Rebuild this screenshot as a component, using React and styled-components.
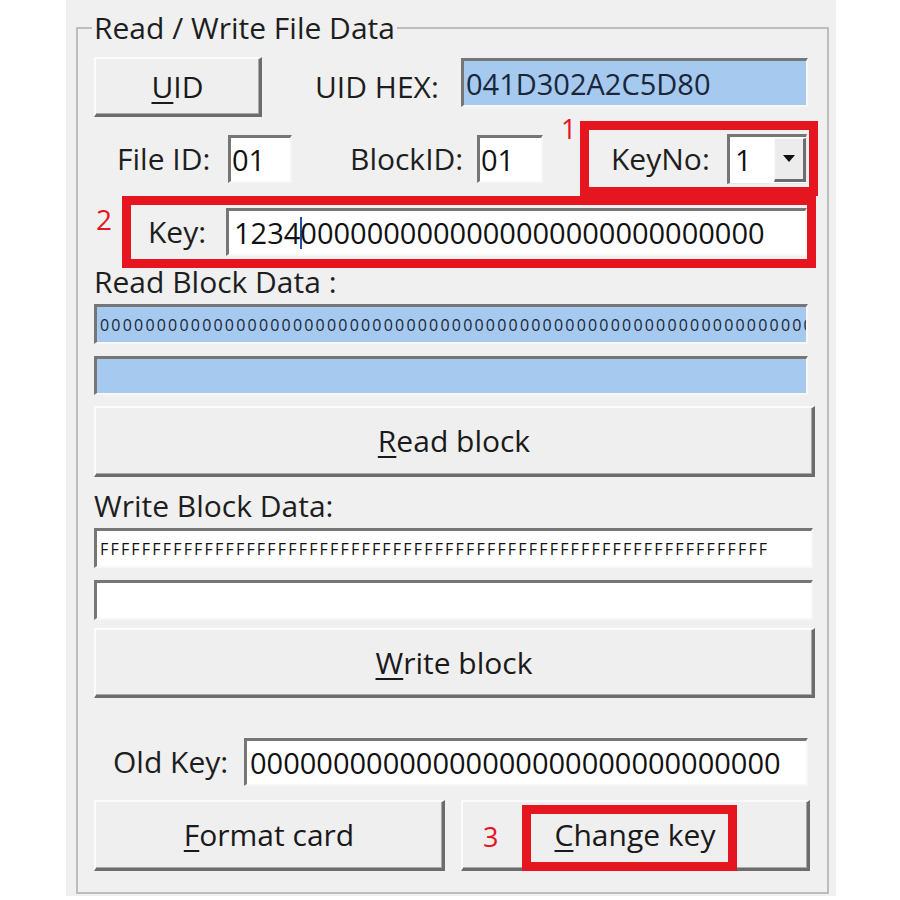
import React from 'react';
import styled, { createGlobalStyle } from 'styled-components';

const Global = createGlobalStyle`
  html, body { margin: 0; padding: 0; background: #ffffff; }
  body { font-family: "Open Sans", "Noto Sans", sans-serif; }
`;

const FONT = `"Open Sans", "Noto Sans", sans-serif`;
const RED = '#e5161f';

const Page = styled.div`
  width: 900px;
  height: 900px;
  background: #ffffff;
  display: flex;
`;

const Panel = styled.div`
  box-sizing: border-box;
  margin-left: 66px;
  width: 770px;
  height: 896px;
  background: #f0f0f0;
  padding: 10px 7px 0 10px;
`;

const GroupBox = styled.fieldset`
  box-sizing: border-box;
  margin: 0;
  min-width: 0;
  height: 884px;
  border: 2px solid #bdbdbd;
  padding: 11px 12px 0 16px;
`;

const Legend = styled.legend`
  font: 30px/36px ${FONT};
  color: #1e1e1e;
  padding: 0 2px;
  margin-left: -2px;
`;

const Column = styled.div`
  display: flex;
  flex-direction: column;
`;

const Row = styled.div`
  display: flex;
  align-items: center;
  height: ${p => p.$h}px;
  margin-top: ${p => p.$mt || 0}px;
  flex-shrink: 0;
`;

const Label = styled.span`
  flex-shrink: 0;
  font: 30px/36px ${FONT};
  color: #1e1e1e;
  white-space: nowrap;
  width: ${p => (p.$w ? `${p.$w}px` : 'auto')};
  margin-left: ${p => p.$ml || 0}px;
`;

const SectionLabel = styled.div`
  font: 30px/30px ${FONT};
  color: #1e1e1e;
  margin-top: ${p => p.$mt || 0}px;
  margin-bottom: 7px;
  white-space: nowrap;
`;

const Field = styled.div`
  box-sizing: border-box;
  flex-shrink: 0;
  display: flex;
  align-items: center;
  overflow: hidden;
  white-space: nowrap;
  width: ${p => p.$w}px;
  height: ${p => p.$h}px;
  margin-top: ${p => p.$mt || 0}px;
  margin-left: ${p => (p.$right ? 'auto' : `${p.$ml || 0}px`)};
  margin-right: ${p => p.$mr || 0}px;
  padding-left: ${p => p.$pl ?? 3}px;
  background: ${p => (p.$blue ? '#a5c9ef' : '#ffffff')};
  color: ${p => (p.$blue ? '#1a2638' : '#111111')};
  border-style: solid;
  border-width: 3px 2px 2px 3px;
  border-color: #767676 #f7f7f7 #f7f7f7 #767676;
  font-family: ${FONT};
  font-size: ${p => (p.$small ? 16 : 29)}px;
  letter-spacing: ${p => (p.$small ? 2.2 : 0)}px;
`;

const Caret = styled.span`
  display: inline-block;
  width: 2px;
  height: 32px;
  margin-right: -2px;
  background: #1d4fa8;
`;

const WinButton = styled.button`
  box-sizing: border-box;
  flex-shrink: 0;
  position: relative;
  width: ${p => p.$w}px;
  height: ${p => p.$h}px;
  margin-top: ${p => p.$mt || 0}px;
  margin-left: ${p => p.$ml || 0}px;
  padding: 0;
  display: flex;
  align-items: center;
  justify-content: center;
  background: #efefef;
  color: #1a1a1a;
  font: 30px/36px ${FONT};
  border-style: solid;
  border-width: 2px 3px 3px 2px;
  border-color: #fbfbfb #6c6c6c #6c6c6c #fbfbfb;
  box-shadow: inset -1px -1px 0 #a8a8a8;

  u {
    text-decoration-thickness: 2px;
    text-underline-offset: 4px;
  }
`;

const RedBox = styled.div`
  box-sizing: border-box;
  position: relative;
  flex-shrink: 0;
  display: flex;
  align-items: center;
  width: ${p => p.$w}px;
  height: ${p => p.$h}px;
  margin-left: ${p => p.$ml || 0}px;
  border: 9px solid ${RED};
`;

const ButtonMark = styled.div`
  box-sizing: border-box;
  position: absolute;
  left: 59px;
  top: 3px;
  width: 215px;
  height: 66px;
  border: 9px solid ${RED};
  pointer-events: none;
`;

const Badge = styled.span`
  position: absolute;
  left: ${p => p.$x}px;
  top: ${p => p.$y}px;
  font: 27px/27px ${FONT};
  color: ${RED};
`;

const InlineBadge = styled.span`
  flex-shrink: 0;
  align-self: flex-start;
  width: 26px;
  padding-left: 2px;
  margin-top: 9px;
  font: 28px/28px ${FONT};
  color: ${RED};
`;

const Combo = styled.div`
  box-sizing: border-box;
  flex-shrink: 0;
  display: flex;
  align-items: center;
  width: 80px;
  height: 50px;
  margin-left: auto;
  margin-right: 2px;
  background: #ffffff;
  border-style: solid;
  border-width: 3px 1px 1px 3px;
  border-color: #767676 #e8e8e8 #e8e8e8 #767676;
  font: 29px ${FONT};
  color: #111;
`;

const ComboText = styled.span`
  flex: 1;
  padding-left: 5px;
`;

const DropButton = styled.div`
  box-sizing: border-box;
  width: 32px;
  height: 44px;
  display: flex;
  align-items: center;
  justify-content: center;
  background: #ececec;
  border-style: solid;
  border-width: 1px 3px 3px 1px;
  border-color: #fafafa #6c6c6c #6c6c6c #fafafa;
`;

const ButtonsRow = styled.div`
  display: flex;
  gap: 16px;
  margin-top: 14px;
`;

export default function App() {
  return (
    <Page>
      <Global />
      <Panel>
        <GroupBox>
          <Legend>Read / Write File Data</Legend>
          <Column>
            <Row $h={60}>
              <WinButton $w={168} $h={60}>
                <span><u>U</u>ID</span>
              </WinButton>
              <Label $ml={53}>UID HEX:</Label>
              <Field $blue $w={347} $h={49} $right $mr={7} $pl={2} style={{ alignSelf: 'flex-start', marginTop: 1 }}>
                041D302A2C5D80
              </Field>
            </Row>

            <Row $h={75} $mt={4}>
              <Label $ml={23} $w={111}>File ID:</Label>
              <Field $w={64} $h={48} $pl={1}>01</Field>
              <Label $ml={58} $w={127}>BlockID:</Label>
              <Field $w={66} $h={48} $pl={1}>01</Field>
              <RedBox $w={238} $h={75} $ml={37}>
                <Badge $x={-28} $y={-15}>1</Badge>
                <Label $ml={22}>KeyNo:</Label>
                <Combo>
                  <ComboText>1</ComboText>
                  <DropButton>
                    <svg width="12" height="8" viewBox="0 0 12 8">
                      <polygon points="0,0 12,0 6,7" fill="#111" />
                    </svg>
                  </DropButton>
                </Combo>
              </RedBox>
            </Row>

            <Row $h={72}>
              <InlineBadge>2</InlineBadge>
              <RedBox $w={694} $h={72}>
                <Label $ml={17}>Key:</Label>
                <Field $w={581} $h={48} $right $pl={5}>
                  1234<Caret />0000000000000000000000000000
                </Field>
              </RedBox>
            </Row>

            <SectionLabel $mt={-1}>Read Block Data :</SectionLabel>
            <Field $blue $small $w={714} $h={40}>
              0000000000000000000000000000000000000000000000000000000000000000
            </Field>
            <Field $blue $w={714} $h={39} $mt={12} />
            <WinButton $w={721} $h={71} $mt={11}>
              <span><u>R</u>ead block</span>
            </WinButton>

            <SectionLabel $mt={14}>Write Block Data:</SectionLabel>
            <Field $small $w={719} $h={40}>
              FFFFFFFFFFFFFFFFFFFFFFFFFFFFFFFFFFFFFFFFFFFFFFFFFFFFFFFFFFFFFFFF
            </Field>
            <Field $w={719} $h={40} $mt={12} />
            <WinButton $w={721} $h={70} $mt={8}>
              <span><u>W</u>rite block</span>
            </WinButton>

            <Row $h={48} $mt={40}>
              <Label $ml={19}>Old Key:</Label>
              <Field $w={564} $h={48} $right $mr={7} $pl={3}>
                00000000000000000000000000000000
              </Field>
            </Row>

            <ButtonsRow>
              <WinButton $w={351} $h={71}>
                <span><u>F</u>ormat card</span>
              </WinButton>
              <WinButton $w={349} $h={71}>
                <Badge $x={20} $y={21}>3</Badge>
                <ButtonMark />
                <span><u>C</u>hange key</span>
              </WinButton>
            </ButtonsRow>
          </Column>
        </GroupBox>
      </Panel>
    </Page>
  );
}
